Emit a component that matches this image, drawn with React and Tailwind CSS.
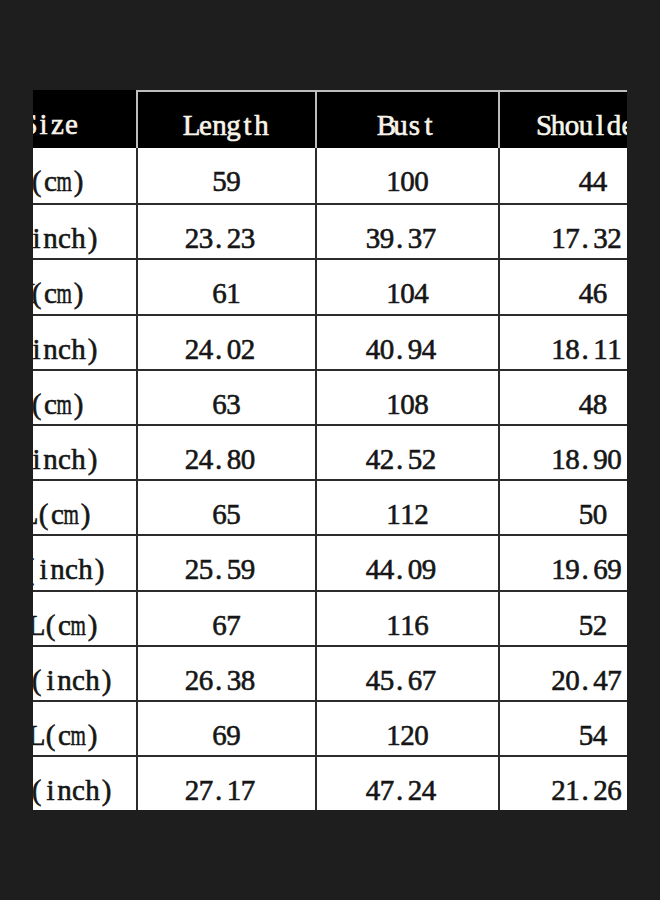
import React from "react";

const rows = [
  ["S(cm)", "59", "100", "44"],
  ["S(inch)", "23.23", "39.37", "17.32"],
  ["M(cm)", "61", "104", "46"],
  ["M(inch)", "24.02", "40.94", "18.11"],
  ["L(cm)", "63", "108", "48"],
  ["L(inch)", "24.80", "42.52", "18.90"],
  ["XL(cm)", "65", "112", "50"],
  ["XL(inch)", "25.59", "44.09", "19.69"],
  ["2XL(cm)", "67", "116", "52"],
  ["2XL(inch)", "26.38", "45.67", "20.47"],
  ["3XL(cm)", "69", "120", "54"],
  ["3XL(inch)", "27.17", "47.24", "21.26"],
];

function Mono({ text }) {
  return (
    <span className="inline-flex">
      {text.split("").map((ch, i) => {
        if (ch === "m")
          return (
            <span key={i} className="inline-flex w-[14px] justify-center">
              <span className="inline-block scale-x-[0.68]">m</span>
            </span>
          );
        if (ch === ".")
          return (
            <span key={i} className="inline-flex w-[14px] justify-start pl-[2px]">
              .
            </span>
          );
        return (
          <span key={i} className="inline-flex w-[14px] justify-center">
            {ch}
          </span>
        );
      })}
    </span>
  );
}

export default function App() {
  return (
    <div
      className="w-[660px] h-[900px] bg-[#1e1e1e] pt-[90px] pl-[33px]"
      style={{ fontFamily: '"Liberation Serif", "DejaVu Serif", serif' }}
    >
      <div className="w-[594px] h-[720px] overflow-hidden">
        <div className="ml-[-68px] w-max text-[29px] leading-normal [-webkit-text-stroke-width:0.6px]">
          {/* header */}
          <div className="grid grid-cols-[171px_179px_183px_188px] h-[58px] bg-black text-[#f7f4ea]">
            <div className="flex items-center justify-center pt-3">
              <Mono text="Size" />
            </div>
            <div className="flex items-center justify-center pt-3 border-l-2 border-t-2 border-[#bdbdbd]">
              <Mono text="Length" />
            </div>
            <div className="flex items-center justify-center pt-3 border-l-2 border-t-2 border-[#bdbdbd]">
              <Mono text="Bust" />
            </div>
            <div className="flex items-center justify-center pt-3 border-l-2 border-t-2 border-[#bdbdbd]">
              <Mono text="Shoulder" />
            </div>
          </div>
          {rows.map((r, ri) => (
            <div
              key={ri}
              className={
                "grid grid-cols-[171px_179px_183px_188px] h-[55.2px] bg-white text-[#161616] " +
                (ri === 0 ? "" : "border-t-2 border-[#2c2c2c]")
              }
            >
              {r.map((c, ci) => (
                <div
                  key={ci}
                  className={
                    "flex items-center justify-center pt-3 " +
                    (ci === 0 ? "" : "border-l-2 border-[#2c2c2c] ") +
                    (ci > 0 && c.includes(".") ? "pr-[13px]" : "")
                  }
                >
                  <Mono text={c} />
                </div>
              ))}
            </div>
          ))}
        </div>
      </div>
    </div>
  );
}
